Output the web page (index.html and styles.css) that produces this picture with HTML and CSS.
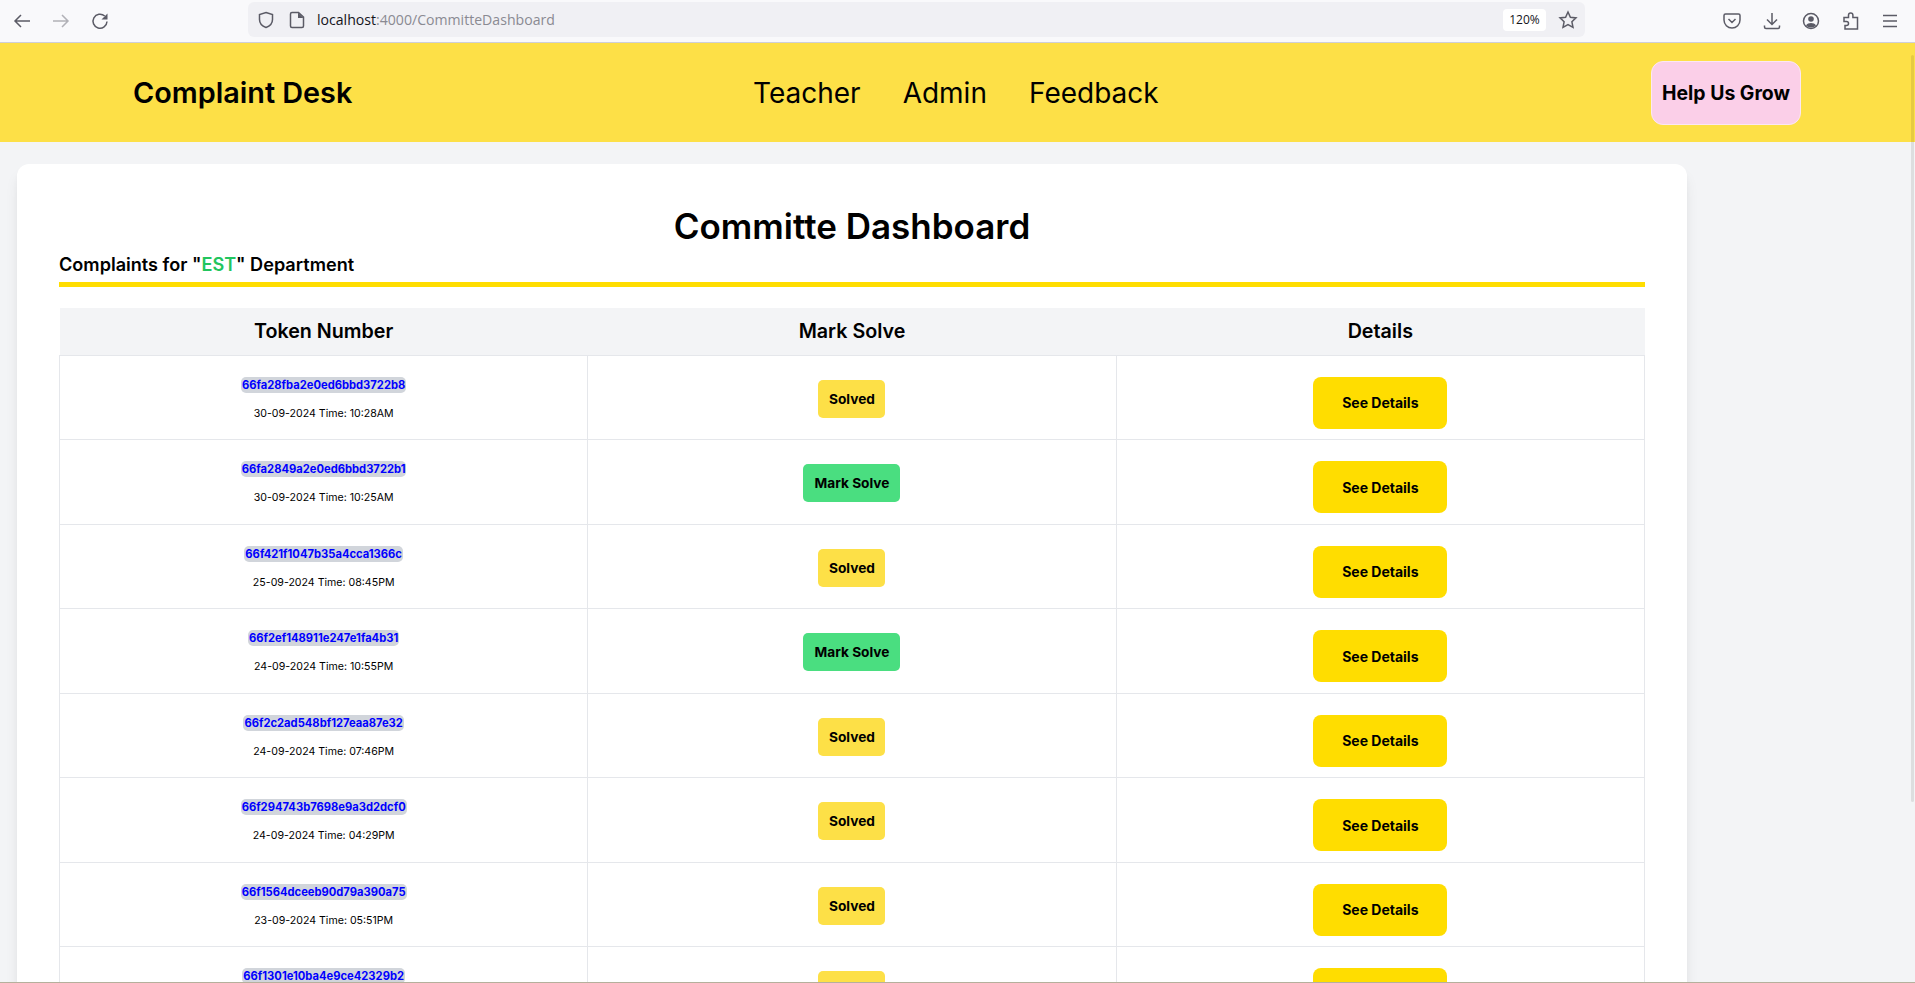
FILE: index.html
```html
<!DOCTYPE html>
<html lang="en">
<head>
    <meta charset="UTF-8">
    <meta name="viewport" content="width=device-width, initial-scale=1.0">
    <title>Committe Dashboard</title>
    <link rel="stylesheet" href="styles.css">
</head>
<body>
    <!-- Browser toolbar -->
    <div class="toolbar">
        <div class="tool-nav">
            <svg class="icon" viewBox="0 0 20 20"><path d="M18 10H3M9 4l-6 6 6 6"/></svg>
            <svg class="icon faded" viewBox="0 0 20 20"><path d="M2 10h15M11 4l6 6-6 6"/></svg>
            <svg class="icon" viewBox="0 0 20 20"><path d="M17 10.500a7 7 0 1 1-2.300-5.500"/><path class="solid" d="M17.500 2.500v6h-6z"/></svg>
        </div>
        <div class="url-bar">
            <svg class="icon url-icon" viewBox="0 0 20 20"><path d="M10 2.500l6.500 2v5c0 4-2.600 6.600-6.500 8-3.900-1.400-6.500-4-6.500-8v-5z"/></svg>
            <svg class="icon url-icon" viewBox="0 0 20 20"><path d="M5 2.500h6.500L16.500 7v9a1.500 1.500 0 0 1-1.500 1.500H5A1.500 1.500 0 0 1 3.500 16V4A1.500 1.500 0 0 1 5 2.500z"/><path class="solid" d="M11 2.500L16.500 8H11z"/></svg>
            <span class="url-text"><b>localhost</b>:4000/CommitteDashboard</span>
            <span class="url-zoom">120%</span>
            <svg class="icon star" viewBox="0 0 20 20"><path d="M10 2l2.400 5.200 5.600.7-4.100 3.900 1.100 5.600-5-2.800-5 2.800 1.100-5.600L2 7.900l5.600-.7z"/></svg>
        </div>
        <div class="tool-right">
            <svg class="icon" viewBox="0 0 20 20"><path d="M3.500 3h13A1.500 1.500 0 0 1 18 4.500V9a8 8 0 0 1-16 0V4.500A1.500 1.500 0 0 1 3.500 3zM6.500 8l3.500 3.500L13.500 8"/></svg>
            <svg class="icon" viewBox="0 0 20 20"><path d="M10 2v11M5 8.500l5 5 5-5M2.500 14.500V16A1.500 1.500 0 0 0 4 17.500h12a1.500 1.500 0 0 0 1.500-1.500v-1.500"/></svg>
            <svg class="icon" viewBox="0 0 20 20"><circle cx="10" cy="10" r="7.500"/><circle class="solid" cx="10" cy="8" r="2.800"/><path class="solid" d="M5 14.500c1-2 3-2.600 5-2.600s4 .6 5 2.600c-1.300 1.300-3 2-5 2s-3.700-.7-5-2z"/></svg>
            <svg class="icon" viewBox="0 0 20 20"><path d="M3 6.500h4.500V4.200a2.200 2.200 0 0 1 4.400 0v2.300h4.600V18H4v-3.500h1.500a2 2 0 0 0 0-4H3z"/></svg>
            <svg class="icon" viewBox="0 0 20 20"><path d="M3 4.500h14M3 10h14M3 15.500h14"/></svg>
        </div>
    </div>

    <nav class="navbar">
        <h1 class="brand">Complaint Desk</h1>
        <div class="nav-links">
            <a href="#">Teacher</a>
            <a href="#">Admin</a>
            <a href="#">Feedback</a>
        </div>
        <button class="grow-btn">Help Us Grow</button>
    </nav>

    <main class="content">
        <div class="card">
            <h2 class="page-title">Committe Dashboard</h2>
            <h3 class="dept-title">Complaints for "<span class="dept-name">EST</span>" Department</h3>
            <div class="rule"></div>
            <table class="complaints">
                <thead>
                    <tr>
                        <th>Token Number</th>
                        <th>Mark Solve</th>
                        <th>Details</th>
                    </tr>
                </thead>
                <tbody>
                    <tr>
                        <td class="token-cell"><a class="token" href="#">66fa28fba2e0ed6bbd3722b8</a><p class="stamp">30-09-2024 Time: 10:28AM</p></td>
                        <td><button class="solved-btn">Solved</button></td>
                        <td><button class="details-btn">See Details</button></td>
                    </tr>
                    <tr>
                        <td class="token-cell"><a class="token" href="#">66fa2849a2e0ed6bbd3722b1</a><p class="stamp">30-09-2024 Time: 10:25AM</p></td>
                        <td><button class="mark-btn">Mark Solve</button></td>
                        <td><button class="details-btn">See Details</button></td>
                    </tr>
                    <tr>
                        <td class="token-cell"><a class="token" href="#">66f421f1047b35a4cca1366c</a><p class="stamp">25-09-2024 Time: 08:45PM</p></td>
                        <td><button class="solved-btn">Solved</button></td>
                        <td><button class="details-btn">See Details</button></td>
                    </tr>
                    <tr>
                        <td class="token-cell"><a class="token" href="#">66f2ef148911e247e1fa4b31</a><p class="stamp">24-09-2024 Time: 10:55PM</p></td>
                        <td><button class="mark-btn">Mark Solve</button></td>
                        <td><button class="details-btn">See Details</button></td>
                    </tr>
                    <tr>
                        <td class="token-cell"><a class="token" href="#">66f2c2ad548bf127eaa87e32</a><p class="stamp">24-09-2024 Time: 07:46PM</p></td>
                        <td><button class="solved-btn">Solved</button></td>
                        <td><button class="details-btn">See Details</button></td>
                    </tr>
                    <tr>
                        <td class="token-cell"><a class="token" href="#">66f294743b7698e9a3d2dcf0</a><p class="stamp">24-09-2024 Time: 04:29PM</p></td>
                        <td><button class="solved-btn">Solved</button></td>
                        <td><button class="details-btn">See Details</button></td>
                    </tr>
                    <tr>
                        <td class="token-cell"><a class="token" href="#">66f1564dceeb90d79a390a75</a><p class="stamp">23-09-2024 Time: 05:51PM</p></td>
                        <td><button class="solved-btn">Solved</button></td>
                        <td><button class="details-btn">See Details</button></td>
                    </tr>
                    <tr>
                        <td class="token-cell"><a class="token" href="#">66f1301e10ba4e9ce42329b2</a></td>
                        <td><button class="solved-btn"></button></td>
                        <td><button class="details-btn"></button></td>
                    </tr>
                </tbody>
            </table>
        </div>
    </main>
    <div class="scroll-thumb"></div>
</body>
</html>
```

FILE: styles.css
```css
* {
    margin: 0;
    padding: 0;
    box-sizing: border-box;
    font-family: Inter, "Open Sans", sans-serif;
}

html, body {
    height: 983px;
    overflow: hidden;
}

body {
    background: #f3f4f6;
    border-bottom: 1px solid #b5b09c;
}

/* Browser toolbar */
.toolbar {
    height: 43px;
    background: #f9f9fb;
    border-bottom: 1px solid #cfcfd8;
    display: flex;
    align-items: center;
}

.icon {
    width: 20px;
    height: 20px;
    fill: none;
    stroke: #5b5b66;
    stroke-width: 1.5;
    flex: none;
}

.icon .solid {
    fill: #5b5b66;
    stroke: none;
}

.icon.faded {
    opacity: 0.45;
}

.tool-nav {
    width: 248px;
    padding-left: 12px;
    display: flex;
    gap: 19px;
}

.url-bar {
    width: 1337px;
    height: 35px;
    margin-top: -3px;
    background: #f0f0f4;
    border-radius: 6px;
    display: flex;
    align-items: center;
    padding-left: 8px;
}

.url-icon {
    margin-right: 11px;
}

.url-text {
    font-family: "Open Sans", sans-serif;
    font-size: 14.1px;
    color: #8a8a92;
    flex: 1;
    margin-left: -1px;
}

.url-text b {
    font-family: "Open Sans", sans-serif;
    font-weight: 400;
    color: #15141a;
}

.url-zoom {
    width: 43px;
    height: 22px;
    line-height: 22px;
    background: #fff;
    border-radius: 4px;
    text-align: center;
    font-family: "Open Sans", sans-serif;
    font-size: 12px;
    color: #15141a;
}

.star {
    margin: 0 7px 0 12px;
}

.tool-right {
    display: flex;
    gap: 19.5px;
    padding-left: 137px;
}

/* Navigation */
.navbar {
    height: 99px;
    background: #fde047;
    display: flex;
    align-items: center;
    padding: 0 114px 0 133px;
}

.brand {
    width: 620px;
    font-size: 28.8px;
    font-weight: 600;
    color: #000;
}

.nav-links {
    flex: 1;
    display: flex;
    gap: 42px;
}

.nav-links a {
    color: #000;
    text-decoration: none;
    font-size: 28px;
    font-weight: 400;
}

.grow-btn {
    width: 150px;
    height: 64px;
    background: #fbcfe8;
    border: 1px solid #fce7f3;
    border-radius: 12px;
    font-size: 19.4px;
    font-weight: 700;
    color: #000;
}

/* Main Content */
.content {
    padding: 22px 0 0 17px;
}

.card {
    width: 1670px;
    height: 900px;
    background: white;
    border-radius: 12px;
    padding: 39px 42px 0;
    box-shadow: 0 10px 15px -3px rgba(0,0,0,0.1), 0 4px 6px -2px rgba(0,0,0,0.05);
}

.page-title {
    text-align: center;
    font-size: 35px;
    font-weight: 600;
    line-height: 46px;
    color: #000;
}

.dept-title {
    font-size: 18.1px;
    font-weight: 600;
    line-height: 26px;
    margin-top: 2px;
    color: #000;
}

.dept-name {
    color: #22c55e;
}

.rule {
    height: 5px;
    background: #ffdd00;
    margin: 5px 0 21px;
}

/* Complaints table */
.complaints {
    width: 1586px;
    border-collapse: collapse;
    table-layout: fixed;
    text-align: center;
}

.complaints th {
    height: 47px;
    background: #f3f4f6;
    font-size: 19.7px;
    font-weight: 600;
    color: #000;
}

.complaints td {
    height: 84.5px;
    border: 1px solid #e5e7eb;
    vertical-align: top;
    padding-top: 21px;
}

.complaints .token-cell {
    line-height: 16px;
}

.token {
    display: inline-block;
    vertical-align: top;
    background: #d1d5db;
    border-radius: 5px;
    padding: 0 1px;
    line-height: 16px;
    font-size: 11.2px;
    font-weight: 700;
    color: #0000ff;
    text-decoration: none;
}

.stamp {
    font-size: 10.6px;
    line-height: 16px;
    margin-top: 13px;
    color: #000;
}

.solved-btn,
.mark-btn {
    display: inline-block;
    height: 38px;
    margin-top: 3px;
    border: none;
    border-radius: 5px;
    font-size: 13.7px;
    font-weight: 700;
    color: #000;
}

.solved-btn {
    width: 67px;
    background: #fde047;
}

.mark-btn {
    width: 97px;
    background: #4ade80;
}

.details-btn {
    display: inline-block;
    width: 134px;
    height: 52px;
    background: #ffdd00;
    border: none;
    border-radius: 8px;
    font-size: 14px;
    font-weight: 700;
    color: #000;
}

.scroll-thumb {
    position: absolute;
    top: 55px;
    right: 1px;
    width: 3px;
    height: 747px;
    background: rgba(0,0,0,0.09);
    border-radius: 2px;
}
```
